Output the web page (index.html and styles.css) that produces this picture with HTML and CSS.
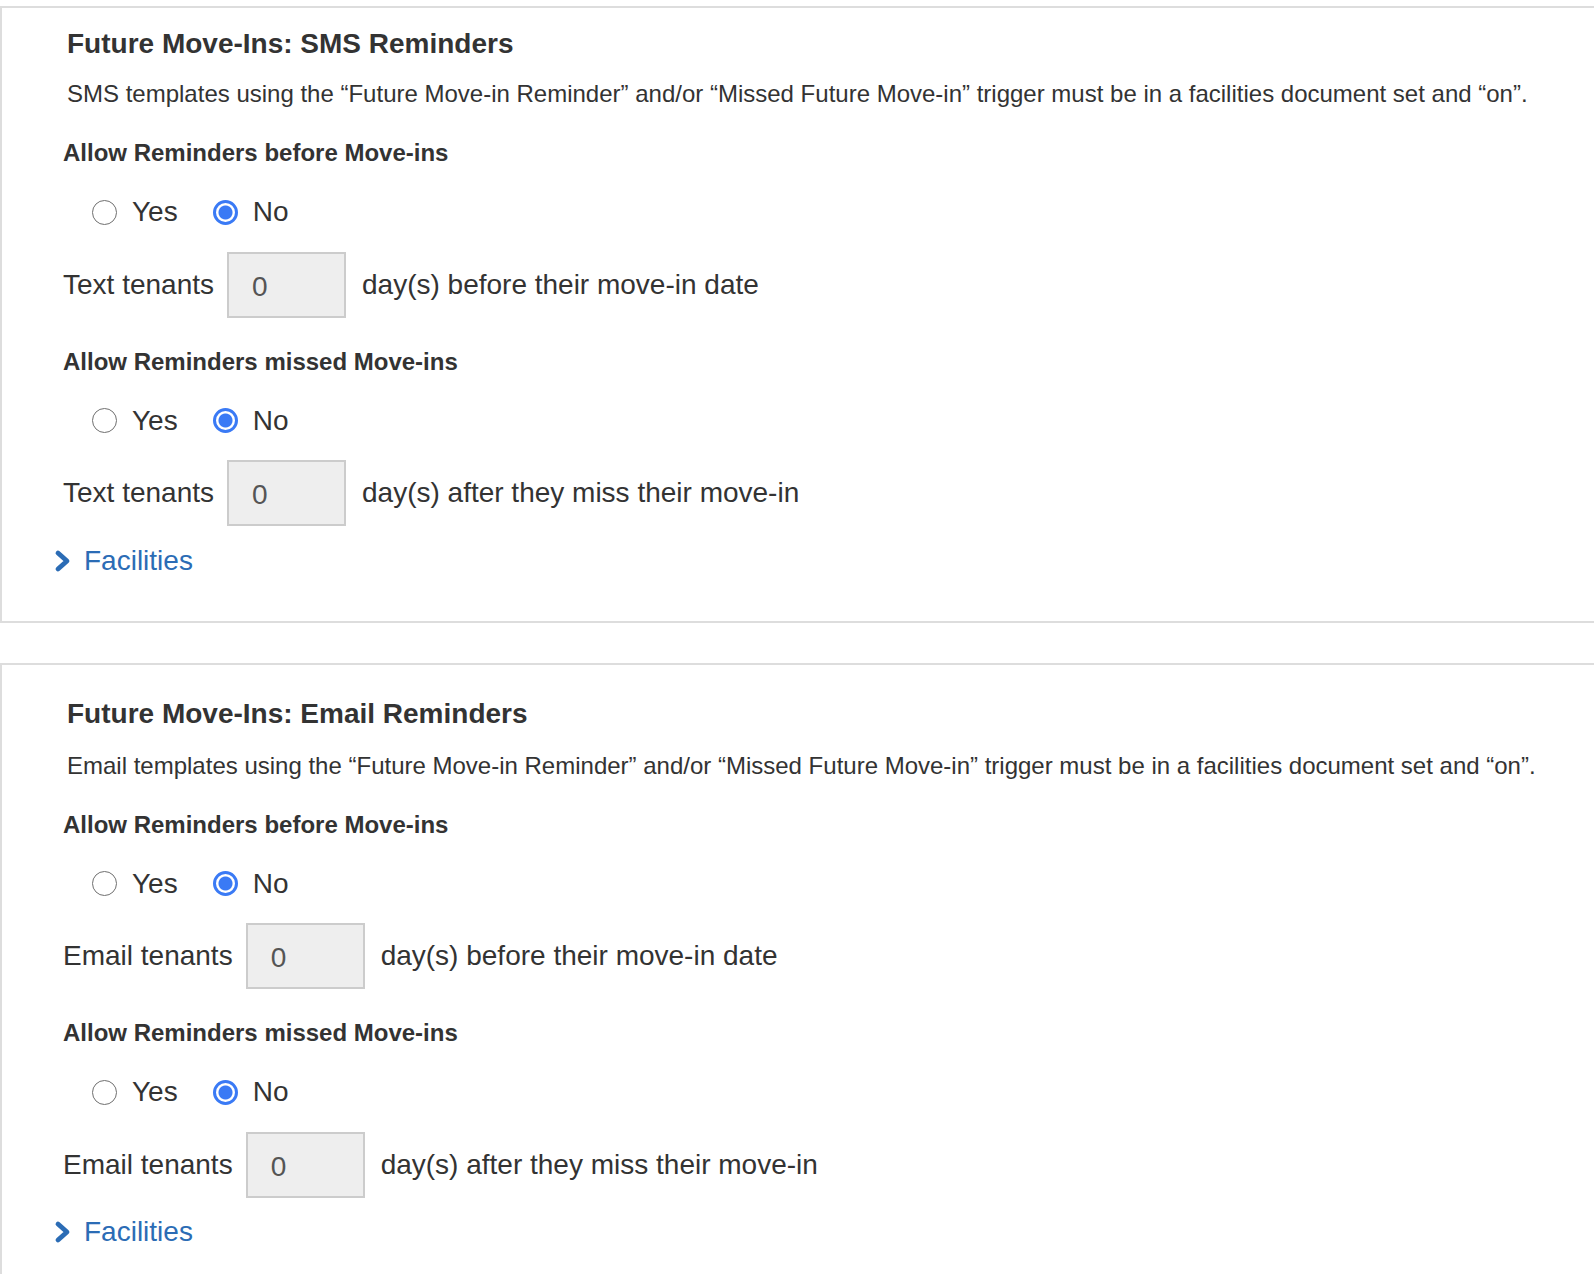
FILE: index.html
```html
<!DOCTYPE html>
<html lang="en">
<head>
<meta charset="utf-8">
<title>Future Move-Ins Reminders</title>
<link rel="stylesheet" href="styles.css">
</head>
<body>
<div class="page">
  <section class="panel panel-first">
    <h2 class="panel-title">Future Move-Ins: SMS Reminders</h2>
    <p class="panel-desc">SMS templates using the “Future Move-in Reminder” and/or “Missed Future Move-in” trigger must be in a facilities document set and “on”.</p>

    <div class="field-label">Allow Reminders before Move-ins</div>
    <div class="radio-row">
      <label class="radio"><input type="radio" name="sms-before"><span class="radio-text">Yes</span></label>
      <label class="radio"><input type="radio" name="sms-before" checked><span class="radio-text">No</span></label>
    </div>
    <div class="days-row">
      <span class="days-lead">Text tenants</span>
      <input class="days-input" type="text" value="0">
      <span class="days-tail">day(s) before their move-in date</span>
    </div>

    <div class="field-label">Allow Reminders missed Move-ins</div>
    <div class="radio-row">
      <label class="radio"><input type="radio" name="sms-missed"><span class="radio-text">Yes</span></label>
      <label class="radio"><input type="radio" name="sms-missed" checked><span class="radio-text">No</span></label>
    </div>
    <div class="days-row">
      <span class="days-lead">Text tenants</span>
      <input class="days-input" type="text" value="0">
      <span class="days-tail">day(s) after they miss their move-in</span>
    </div>

    <a class="facilities" href="#">
      <svg class="chev" width="18" height="24" viewBox="0 0 18 24" aria-hidden="true"><polyline points="4,4 13,12 4,20" fill="none" stroke="currentColor" stroke-width="4.8" stroke-linecap="round" stroke-linejoin="round"/></svg>
      <span>Facilities</span>
    </a>
  </section>

  <section class="panel panel-second">
    <h2 class="panel-title">Future Move-Ins: Email Reminders</h2>
    <p class="panel-desc">Email templates using the “Future Move-in Reminder” and/or “Missed Future Move-in” trigger must be in a facilities document set and “on”.</p>

    <div class="field-label">Allow Reminders before Move-ins</div>
    <div class="radio-row">
      <label class="radio"><input type="radio" name="em-before"><span class="radio-text">Yes</span></label>
      <label class="radio"><input type="radio" name="em-before" checked><span class="radio-text">No</span></label>
    </div>
    <div class="days-row">
      <span class="days-lead">Email tenants</span>
      <input class="days-input" type="text" value="0">
      <span class="days-tail">day(s) before their move-in date</span>
    </div>

    <div class="field-label">Allow Reminders missed Move-ins</div>
    <div class="radio-row">
      <label class="radio"><input type="radio" name="em-missed"><span class="radio-text">Yes</span></label>
      <label class="radio"><input type="radio" name="em-missed" checked><span class="radio-text">No</span></label>
    </div>
    <div class="days-row">
      <span class="days-lead">Email tenants</span>
      <input class="days-input" type="text" value="0">
      <span class="days-tail">day(s) after they miss their move-in</span>
    </div>

    <a class="facilities" href="#">
      <svg class="chev" width="18" height="24" viewBox="0 0 18 24" aria-hidden="true"><polyline points="4,4 13,12 4,20" fill="none" stroke="currentColor" stroke-width="4.8" stroke-linecap="round" stroke-linejoin="round"/></svg>
      <span>Facilities</span>
    </a>
  </section>
</div>
</body>
</html>
```

FILE: styles.css
```css
html, body {
  margin: 0;
  padding: 0;
  background: #ffffff;
  overflow: hidden;
}

body {
  font-family: "Liberation Sans", Arial, Helvetica, sans-serif;
  color: #333333;
}

.page {
  padding-top: 6px;
  width: 1660px;
}

.panel {
  border: 2px solid #dddddd;
  padding: 19px 0 43px 61px;
  display: flex;
  flex-direction: column;
  align-items: flex-start;
}

.panel-second {
  margin-top: 40px;
  padding-top: 32px;
}

.panel-title {
  margin: 0 0 0 4px;
  font-size: 28px;
  font-weight: bold;
  line-height: 34px;
}

.panel-desc {
  margin: 18px 0 0 4px;
  font-size: 24px;
  line-height: 30px;
}

.panel-second .panel-desc {
  margin-top: 20px;
}

.field-label {
  margin-top: 29px;
  font-size: 24px;
  font-weight: bold;
  line-height: 30px;
}

.radio-row {
  margin-top: 27px;
  margin-left: 29px;
  display: flex;
  align-items: center;
  gap: 35px;
  height: 34px;
}

.radio {
  display: flex;
  align-items: center;
  gap: 15px;
  font-size: 28px;
  line-height: 34px;
  cursor: pointer;
}

.radio input {
  appearance: none;
  -webkit-appearance: none;
  margin: 0;
  width: 25px;
  height: 25px;
  border-radius: 50%;
  border: 1.7px solid #6f6f6f;
  background: #ffffff;
  box-sizing: border-box;
}

.radio input:checked {
  border: 3px solid #3a7af5;
  background: radial-gradient(circle, #3a7af5 0, #3a7af5 6.5px, #ffffff 7.5px);
}

.days-row {
  margin-top: 22.5px;
  display: flex;
  align-items: center;
  font-size: 28px;
  line-height: 34px;
}

.days-lead {
  margin-right: 13px;
}

.days-input {
  box-sizing: border-box;
  width: 119px;
  height: 66px;
  margin: 0 16px 0 0;
  padding: 4px 0 0 23px;
  border: 2px solid #cccccc;
  background: #eeeeee;
  font-family: "Liberation Sans", Arial, Helvetica, sans-serif;
  font-size: 28px;
  color: #555555;
  border-radius: 0;
  outline: none;
}

.facilities {
  margin-top: 17.5px;
  margin-left: -9px;
  display: flex;
  align-items: center;
  gap: 12px;
  color: #2b6cb5;
  text-decoration: none;
  font-size: 28px;
  line-height: 34px;
}

.chev {
  display: block;
}
```
